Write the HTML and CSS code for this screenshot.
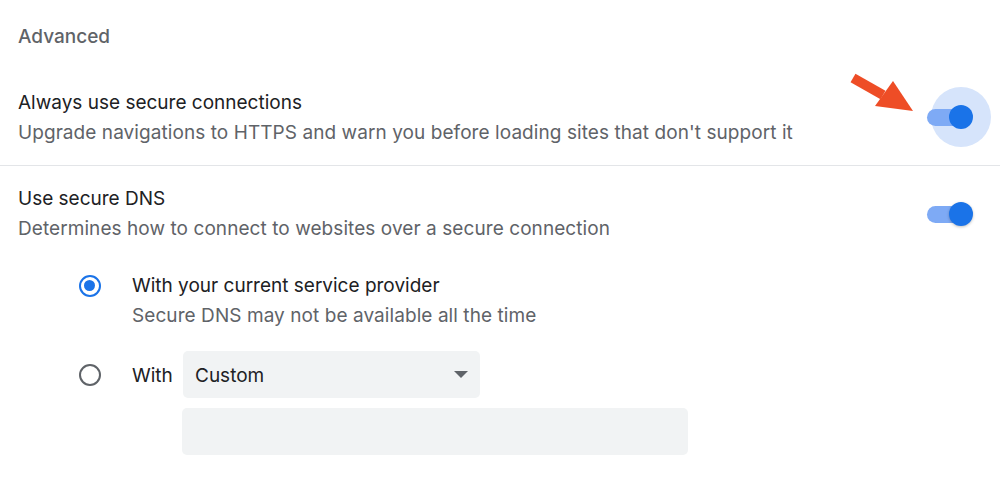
FILE: index.html
```html
<!DOCTYPE html>
<html>
<head>
<meta charset="utf-8">
<link rel="stylesheet" href="styles.css">
</head>
<body>
<div class="page">
  <div class="section-title">Advanced</div>
  <div class="row row-first">
    <div class="text">
      <div class="label">Always use secure connections</div>
      <div class="sub">Upgrade navigations to HTTPS and warn you before loading sites that don't support it</div>
    </div>
    <div class="toggle focused"><span class="halo"></span><span class="track"></span><span class="knob"></span></div>
    <svg class="arrow" width="80" height="50" viewBox="0 0 80 50">
      <path d="M4 6 L34 23" stroke="#ee4d26" stroke-width="10" stroke-linecap="butt" fill="none"/>
      <polygon points="44,9 64,39 26,34" fill="#ee4d26"/>
    </svg>
  </div>
  <div class="row row-second">
    <div class="text">
      <div class="label">Use secure DNS</div>
      <div class="sub">Determines how to connect to websites over a secure connection</div>
    </div>
    <div class="toggle"><span class="track"></span><span class="knob shadow"></span></div>
  </div>
  <div class="radios">
    <div class="radio-row">
      <span class="radio checked"></span>
      <div class="text">
        <div class="label">With your current service provider</div>
        <div class="sub">Secure DNS may not be available all the time</div>
      </div>
    </div>
    <div class="radio-row custom">
      <span class="radio"></span>
      <div class="custom-body">
        <div class="custom-line">
          <span class="label">With</span>
          <div class="select"><span>Custom</span><span class="caret"></span></div>
        </div>
        <div class="input"></div>
      </div>
    </div>
  </div>
</div>
</body>
</html>
```
FILE: styles.css
```css
html, body {
  margin: 0;
  padding: 0;
  background: #fff;
}
body {
  font-family: Inter, Roboto, "Noto Sans", Arial, sans-serif;
  color: #202124;
  width: 1000px;
  height: 487px;
  overflow: hidden;
}
.page {
  padding-top: 22px;
}
.section-title {
  padding-left: 18px;
  font-size: 19px;
  font-weight: 500;
  line-height: 30px;
  color: #5f6368;
}
.row {
  position: relative;
  display: flex;
  align-items: center;
  justify-content: space-between;
  padding: 0 27px 0 18px;
}
.row-first {
  margin-top: 36px;
  padding-bottom: 17px;
  border-bottom: 1px solid #e3e5e8;
}
.row-second {
  padding-top: 18px;
}
.label {
  font-size: 19px;
  line-height: 30px;
  color: #202124;
}
.sub {
  font-size: 19px;
  line-height: 30px;
  letter-spacing: 0.07px;
  color: #5f6368;
}
.toggle {
  position: relative;
  width: 46px;
  height: 24px;
  flex: none;
}
.track {
  position: absolute;
  left: 0;
  right: 2px;
  top: 4px;
  height: 17px;
  border-radius: 9px;
  background: #7eaaf5;
}
.knob {
  position: absolute;
  right: 0;
  top: 0;
  width: 24px;
  height: 24px;
  border-radius: 50%;
  background: #1a73e8;
}
.knob.shadow {
  box-shadow: 0 1px 3px rgba(0,0,0,0.25);
}
.halo {
  position: absolute;
  right: -18px;
  top: -18px;
  width: 60px;
  height: 60px;
  border-radius: 50%;
  background: #d6e4fb;
}
.row-first .toggle { margin-top: -2px; }
.arrow {
  position: absolute;
  left: 849px;
  top: -16px;
}
.radios {
  padding-left: 79px;
  padding-top: 27px;
}
.radio-row {
  display: flex;
  align-items: flex-start;
}
.radio {
  flex: none;
  width: 22px;
  height: 22px;
  box-sizing: border-box;
  border-radius: 50%;
  border: 2.5px solid #5f6368;
  margin-top: 4px;
  margin-right: 31px;
  position: relative;
}
.radio.checked {
  border-color: #1a73e8;
}
.radio.checked::after {
  content: "";
  position: absolute;
  left: 3px;
  top: 3px;
  width: 11px;
  height: 11px;
  border-radius: 50%;
  background: #1a73e8;
}
.custom {
  margin-top: 20px;
}
.custom .radio {
  margin-top: 13px;
}
.custom-line {
  display: flex;
  align-items: center;
}
.custom-line .label {
  width: 51px;
  padding-top: 2px;
}
.select {
  width: 297px;
  height: 47px;
  box-sizing: border-box;
  background: #f1f3f4;
  border-radius: 5px;
  display: flex;
  align-items: center;
  justify-content: space-between;
  padding: 2px 12px 0 12px;
  font-size: 19px;
  color: #202124;
}
.caret {
  width: 0;
  height: 0;
  border-left: 7px solid transparent;
  border-right: 7px solid transparent;
  border-top: 7px solid #5f6368;
  margin-top: -2px;
}
.input {
  margin-left: 50px;
  margin-top: 10px;
  width: 506px;
  height: 47px;
  background: #f1f3f4;
  border-radius: 5px;
}
```
